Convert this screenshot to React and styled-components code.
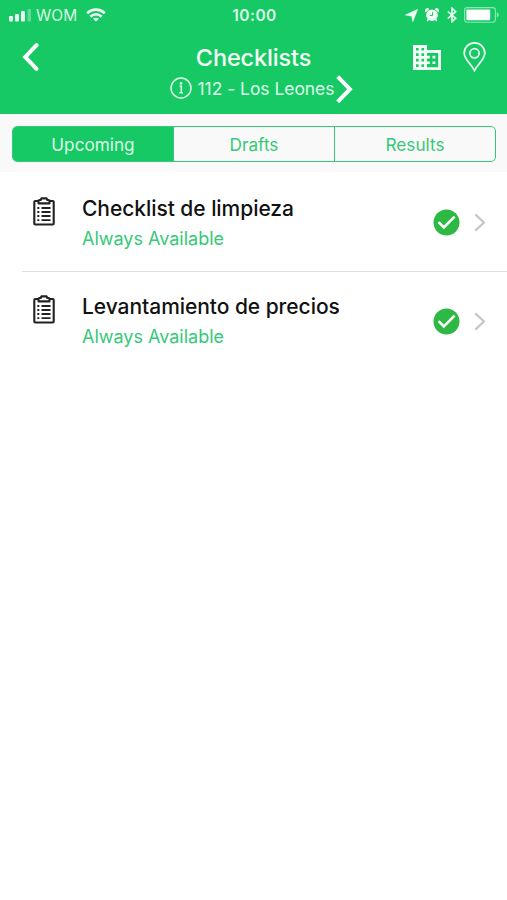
import React, {useState} from 'react';
import styled, {createGlobalStyle} from 'styled-components'

const tabs = ['Upcoming', 'Drafts', 'Results'];

const checklists = [
  {id: 1, name: 'Checklist de limpieza', status: 'Always Available'},
  {id: 2, name: 'Levantamiento de precios', status: 'Always Available'},
];

const App = () => {
  const [selected, setSelected] = useState('Upcoming');

  return (
    <Screen>
      <GlobalStyle />
      <Header>
        <StatusBar>
          <StatusLeft>
            <SignalIcon />
            <Carrier>WOM</Carrier>
            <WifiIcon />
          </StatusLeft>
          <Clock>10:00</Clock>
          <StatusRight>
            <LocationIcon />
            <AlarmIcon />
            <BluetoothIcon />
            <BatteryIcon />
          </StatusRight>
        </StatusBar>
        <NavBar>
          <NavLeft><BackIcon /></NavLeft>
          <Title>Checklists</Title>
          <NavRight>
            <BuildingIcon />
            <PinIcon />
          </NavRight>
        </NavBar>
        <Store>
          <InfoIcon />
          <StoreName>112 - Los Leones</StoreName>
          <NextIcon />
        </Store>
      </Header>

      <TabBar>
        <Segmented>
          {tabs.map((tab) => (
            <Tab key={tab} $active={tab === selected} onClick={() => setSelected(tab)}>{tab}</Tab>
          ))}
        </Segmented>
      </TabBar>

      <List>
        {checklists.map((item) => (
          <Row key={item.id}>
            <RowIcon><ClipboardIcon /></RowIcon>
            <RowText>
              <Name>{item.name}</Name>
              <Status>{item.status}</Status>
            </RowText>
            <RowEnd>
              <CheckIcon />
              <ChevronIcon />
            </RowEnd>
          </Row>
        ))}
      </List>
    </Screen>
  );
}

const SignalIcon = () => (
  <svg width="22" height="14" viewBox="0 0 22 14" fill="#e9fff1">
    <rect x="0" y="8" width="4" height="5.5" rx="1" />
    <rect x="6" y="6" width="4" height="7.5" rx="1" />
    <rect x="12" y="3" width="4" height="10.5" rx="1" />
    <rect x="18.5" y="1" width="3.5" height="12.5" rx="1" opacity=".35" />
  </svg>
)

const WifiIcon = () => (
  <svg width="20" height="14" viewBox="0 0 20 14" fill="none" stroke="#f0fff5" strokeWidth="2.7">
    <path d="M1.2 5.2C6.2.5 13.8.5 18.8 5.2" />
    <path d="M4.4 8.7c3.3-3 7.9-3 11.2 0" />
    <path d="M10 13.6 7 10.8c1.8-1.4 4.2-1.4 6 0z" fill="#f0fff5" stroke="none" />
  </svg>
)

const LocationIcon = () => (
  <svg width="13" height="13" viewBox="0 0 13 13" fill="#f0fff5">
    <path d="M12.8.2 7.8 12.8 6.6 7.2.2 6z" stroke="#f0fff5" strokeWidth=".4" />
  </svg>
)

const AlarmIcon = () => (
  <svg width="14" height="14" viewBox="0 0 14 14" fill="#f0fff5">
    <circle cx="7" cy="7.2" r="5.8" />
    <path d="M.6 4.4A2.4 2.4 0 0 1 4.2 1zM13.4 4.4A2.4 2.4 0 0 0 9.8 1z" />
    <path d="m3.6 11-1.3 2M10.4 11l1.3 2" stroke="#f0fff5" strokeWidth="1.5" />
    <path d="M7.5 4.2v3.3H4.8" fill="none" stroke="#17c964" strokeWidth="1" />
  </svg>
)

const BluetoothIcon = () => (
  <svg width="10" height="16" viewBox="0 0 10 16" fill="none" stroke="#e9fff1" strokeWidth="1.6">
    <path d="M.8 4.5 8.7 11.3 5 14.8V1.2l3.7 3.5L.8 11.5" />
  </svg>
)

const BatteryIcon = () => (
  <svg width="36" height="16" viewBox="0 0 36 16">
    <rect x=".6" y=".6" width="30.8" height="14.6" rx="2.6" fill="none" stroke="#8ce8b2" strokeWidth="1.1" />
    <rect x="2.4" y="2.6" width="23.8" height="10.6" rx=".8" fill="#fff" />
    <path d="M32.8 5.3c2.6.5 2.6 4.6 0 5.1z" fill="#8ce8b2" />
  </svg>
)

const BackIcon = () => (
  <svg width="18" height="30" viewBox="0 0 18 30" fill="none" stroke="#fff" strokeWidth="4" strokeLinecap="round">
    <path d="M15.5 3.2 4.2 15l11.3 11.8" />
  </svg>
)

const NextIcon = () => (
  <svg width="18" height="30" viewBox="0 0 18 30" fill="none" stroke="#fff" strokeWidth="4">
    <path d="M1.7 3.6 13.9 16.2 1.7 28.8" />
  </svg>
)

const BuildingIcon = () => (
  <svg width="28" height="25" viewBox="0 0 28 25" fill="#f4fff8">
    <path fillRule="evenodd" d="M0 0h14v5h14v20H0zM3 3v2.6h2.6V3zM8.5 3v2.6h2.6V3zM3 8.3v2.6h2.6V8.3zM8.5 8.3v2.6h2.6V8.3zM3 13.8v2.6h2.6v-2.6zM8.5 13.8v2.6h2.6v-2.6zM3 19.3v2.8h2.6v-2.8zM8.5 19.3v2.8h2.6v-2.8zM14 8v2.8h2.8v2.6H14v3h2.8V19H14v3.2h11.2V8z" />
    <path d="M19.5 10.8h2.8v2.6h-2.8zM19.5 16.4h2.8V19h-2.8z" />
  </svg>
)

const PinIcon = () => (
  <svg width="23" height="30" viewBox="0 0 23 30" fill="none" stroke="#e9fff1" strokeWidth="1.7">
    <path d="M11.5 28.6C8 21.5 1.2 17.5 1.2 11a10.3 10.1 0 0 1 20.6 0c0 6.5-6.8 10.5-10.3 17.6z" />
    <circle cx="11.5" cy="11.3" r="4.6" />
  </svg>
)

const InfoIcon = () => (
  <svg width="22" height="22" viewBox="0 0 22 22" fill="none" stroke="#dcfbe8" strokeWidth="1.5">
    <circle cx="11" cy="11" r="10" />
    <path d="M9.6 9.2h1.7v6.4M9.4 15.7h3.6" strokeWidth="1.6" />
    <circle cx="11" cy="6.4" r="1.3" fill="#dcfbe8" stroke="none" />
  </svg>
)

const ClipboardIcon = () => (
  <svg width="22" height="29" viewBox="0 0 22 29" fill="none" stroke="#222" strokeWidth="2.1" strokeLinejoin="round">
    <path d="M6 4H2.3Q1.3 4 1.3 5V26.5Q1.3 27.5 2.3 27.5H19.7Q20.7 27.5 20.7 26.5V5Q20.7 4 19.7 4H16" />
    <path d="M5.5 6.4V3.6Q5.5 3 6.5 3H7.700L8.400 1.400H13.600L14.300 3H15.500Q16.500 3 16.500 3.600V6.400z" />
    <path d="M8.5 11h9M8.5 15h9M8.5 19h9M8.5 23.2h9" strokeWidth="1.8" />
    <path d="M4.3 11h2M4.3 15h2M4.3 19h2M4.3 23.2h2" strokeWidth="1.8" />
  </svg>
)

const CheckIcon = () => (
  <svg width="27" height="27" viewBox="0 0 27 27" fill="none">
    <circle cx="13.5" cy="13.5" r="13" fill="#2eb844" />
    <path d="m5.6 13.2 5.2 5.2L21.6 7.6" stroke="#fff" strokeWidth="2.6" />
  </svg>
)

const ChevronIcon = () => (
  <svg width="12" height="19" viewBox="0 0 12 19" fill="none" stroke="#c7c7cc" strokeWidth="2.4">
    <path d="m1.3 1.3 8.6 8.2-8.6 8.2" />
  </svg>
)

const GlobalStyle = createGlobalStyle`
  body {
    margin: 0;
    background-color: #FFF;
  }
  * {
    box-sizing: border-box;
  }
  svg {
    display: block;
    flex-shrink: 0;
  }
`

const Screen = styled.div`
  width: 100%;
  min-height: 900px;
  background-color: #FFF;
  font-family: Inter, "Liberation Sans", sans-serif;
`

const Header = styled.div`
  height: 114px;
  background-color: #17c964;
  color: #f4fff8;
`

const StatusBar = styled.div`
  height: 30px;
  display: grid;
  grid-template-columns: 1fr auto 1fr;
  align-items: center;
  padding: 0 7px 0 9px;
`

const StatusLeft = styled.div`
  display: flex;
  align-items: center;
`

const Carrier = styled.div`
  font-size: 15.5px;
  color: #d5fae3;
  margin: 0 9px 0 5px;
`

const Clock = styled.div`
  font-size: 15.5px;
  font-weight: 600;
  letter-spacing: 0.5px;
  color: #dcfbe8;
`

const StatusRight = styled.div`
  display: flex;
  align-items: center;
  justify-content: flex-end;
  gap: 7.5px;
`

const NavBar = styled.div`
  height: 54px;
  display: grid;
  grid-template-columns: 1fr auto 1fr;
  align-items: center;
  padding: 0 21px;
`

const NavLeft = styled.div`
  display: flex;
`

const Title = styled.div`
  font-size: 23.5px;
  font-weight: 500;
  letter-spacing: -0.15px;
`

const NavRight = styled.div`
  display: flex;
  align-items: center;
  justify-content: flex-end;
  gap: 22px;
`

const Store = styled.div`
  height: 8px;
  display: flex;
  justify-content: center;
  align-items: center;
  padding-left: 17px;
`

const StoreName = styled.div`
  font-size: 17.5px;
  color: #dcfbe8;
  margin: 0 2px 0 6px;
  letter-spacing: -0.05px;
  white-space: nowrap;
`

const TabBar = styled.div`
  height: 58px;
  padding: 12px 11px 10px 12px;
  background-color: #f9f9f9;
`

const Segmented = styled.div`
  height: 36px;
  display: grid;
  grid-template-columns: 160px 161px 1fr;
  border: 1px solid #35c978;
  border-radius: 5px;
  overflow: hidden;
`

const Tab = styled.div`
  display: flex;
  justify-content: center;
  align-items: center;
  padding-top: 1px;
  font-size: 17.2px;
  cursor: pointer;
  color: ${props => props.$active ? '#dcfbe8' : '#35c978'};
  background-color: ${props => props.$active ? '#17c964' : 'transparent'};
  & + & {
    border-left: 1px solid #35c978;
  }
`

const List = styled.div`
  padding-top: 1.5px;
`

const Row = styled.div`
  height: 98.5px;
  margin-left: 22px;
  padding-right: 21px;
  display: flex;
  border-bottom: 1px solid #dedede;
  &:last-child {
    border-bottom: none;
  }
`

const RowIcon = styled.div`
  width: 60px;
  padding: 23px 0 0 11px;
`

const RowText = styled.div`
  flex: 1;
  padding-top: 20px;
`

const Name = styled.div`
  font-size: 21px;
  line-height: 30px;
  font-weight: 500;
  letter-spacing: -0.05px;
  color: #111;
  white-space: nowrap;
`

const Status = styled.div`
  font-size: 18px;
  line-height: 30px;
  color: #35c978;
`

const RowEnd = styled.div`
  display: flex;
  align-items: center;
  gap: 14.5px;
`

export default App;
